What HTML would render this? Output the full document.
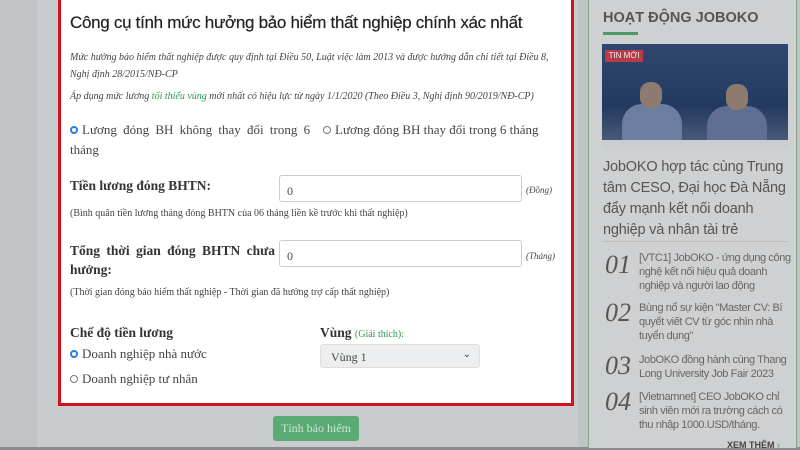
<!DOCTYPE html>
<html><head><meta charset="utf-8"><style>
*{margin:0;padding:0;box-sizing:border-box}
body{width:800px;height:450px;overflow:hidden;background:#c2c3c4;position:relative;font-family:"Liberation Serif",serif;color:#333}
.panel{position:absolute;left:37px;top:0;width:541px;height:450px;background:#cacbcc}
.red{position:absolute;left:58px;top:-4px;width:516px;height:410px;border:3px solid #d0121b;background:#fff}
.abs{position:absolute;white-space:nowrap}
h1{position:absolute;left:70px;top:13px;font:400 17px "Liberation Sans",sans-serif;letter-spacing:-0.3px;color:#222;white-space:nowrap;-webkit-text-stroke:0.2px #222}
.it{font-style:italic;font-size:10px;color:#444}
.g{color:#2a9a4a}
.r{font-size:13px;color:#444}
.b{font-weight:bold;font-size:13.5px;color:#333}
.sm{font-size:10px;color:#444}
.inp{position:absolute;background:#fff;border:1px solid #ccc;border-radius:3px;font-size:12px;padding:8px 7px;color:#444}
.dot{display:inline-block;width:8px;height:8px;border-radius:50%;border:1px solid #777;margin-right:4px;vertical-align:0}
.dot.on{border:2.5px solid #2d7fd6;background:#fff}
.side{position:absolute;left:588px;top:0;width:209px;height:448px;background:#cfd0d1;border-left:1px solid #7fa88d;border-right:1px solid #7fa88d}
.sf{font-family:"Liberation Sans",sans-serif}
.num{position:absolute;left:605px;font:italic 26px "Liberation Serif",serif;color:#555}
.it2{position:absolute;left:639px;font:11px/14px "Liberation Sans",sans-serif;letter-spacing:-0.4px;color:#666;width:156px}
</style></head><body>
<div class="panel"></div>
<div class="red"></div>
<h1>Công cụ tính mức hưởng bảo hiểm thất nghiệp chính xác nhất</h1>
<div class="abs it" style="left:70px;top:52px">Mức hưởng bảo hiểm thất nghiệp được quy định tại Điều 50, Luật việc làm 2013 và được hướng dẫn chi tiết tại Điều 8,</div>
<div class="abs it" style="left:70px;top:69px">Nghị định 28/2015/NĐ-CP</div>
<div class="abs it" style="left:70px;top:91px">Áp dụng mức lương <span class="g">tối thiểu vùng</span> mới nhất có hiệu lực từ ngày 1/1/2020 (Theo Điều 3, Nghị định 90/2019/NĐ-CP)</div>
<div class="abs r" style="left:70px;top:122px;word-spacing:3px"><span class="dot on"></span>Lương đóng BH không thay đổi trong 6</div>
<div class="abs r" style="left:323px;top:122px"><span class="dot"></span>Lương đóng BH thay đổi trong 6 tháng</div>
<div class="abs r" style="left:70px;top:142px">tháng</div>
<div class="abs b" style="left:70px;top:178px">Tiền lương đóng BHTN:</div>
<div class="inp" style="left:279px;top:175px;width:243px;height:27px">0</div>
<div class="abs it" style="left:526px;top:185px;font-size:9px">(Đồng)</div>
<div class="abs sm" style="left:70px;top:208px">(Bình quân tiền lương tháng đóng BHTN của 06 tháng liền kề trước khi thất nghiệp)</div>
<div class="abs b" style="left:70px;top:243px;word-spacing:3px">Tổng thời gian đóng BHTN chưa</div>
<div class="abs b" style="left:70px;top:262px">hưởng:</div>
<div class="inp" style="left:279px;top:240px;width:243px;height:27px">0</div>
<div class="abs it" style="left:526px;top:251px;font-size:9px">(Tháng)</div>
<div class="abs sm" style="left:70px;top:287px">(Thời gian đóng bảo hiểm thất nghiệp - Thời gian đã hưởng trợ cấp thất nghiệp)</div>
<div class="abs b" style="left:70px;top:325px">Chế độ tiền lương</div>
<div class="abs r" style="left:70px;top:346px"><span class="dot on"></span>Doanh nghiệp nhà nước</div>
<div class="abs r" style="left:70px;top:371px"><span class="dot"></span>Doanh nghiệp tư nhân</div>
<div class="abs b" style="left:320px;top:325px">Vùng <span class="g" style="font-weight:normal;font-size:10px">(Giải thích):</span></div>
<div class="abs" style="left:320px;top:344px;width:160px;height:24px;background:#eceeef;border:1px solid #ddd;border-radius:3px;font-size:12px;padding:5px 10px;color:#444">Vùng 1<span style="position:absolute;right:8px;top:4px;font-size:10px">⌄</span></div>
<div class="abs" style="left:273px;top:416px;width:86px;height:25px;background:#5aaa74;border-radius:3px;color:#cfe6d5;font-size:12px;text-align:center;line-height:25px">Tính bảo hiểm</div>
<div style="position:absolute;left:0;top:447px;width:800px;height:3px;background:#8a8b8c"></div>
<div class="side"></div>
<div class="abs sf" style="left:603px;top:10px;font-size:14.5px;font-weight:bold;color:#555">HOẠT ĐỘNG JOBOKO</div>
<div class="abs" style="left:603px;top:32px;width:35px;height:3px;background:#4e9a64"></div>
<div class="abs" style="left:602px;top:44px;width:186px;height:104px;background:linear-gradient(#2f4770,#233a60 60%,#51617d)">
<div style="position:absolute;left:3px;top:6px;width:38px;height:12px;background:#b73c48;color:#eee;font:8px/12px 'Liberation Sans',sans-serif;text-align:center">TIN MỚI</div>
<div style="position:absolute;left:20px;top:60px;width:60px;height:44px;background:#6b7ea0;border-radius:20px 20px 0 0"></div>
<div style="position:absolute;left:38px;top:38px;width:22px;height:26px;background:#8d7b70;border-radius:10px"></div>
<div style="position:absolute;left:105px;top:62px;width:60px;height:42px;background:#5f6f92;border-radius:20px 20px 0 0"></div>
<div style="position:absolute;left:124px;top:40px;width:22px;height:26px;background:#8d7b70;border-radius:10px"></div>
<div style="position:absolute;left:0;top:96px;width:186px;height:8px;background:#c9ccd1"></div>
</div>
<div class="abs sf" style="left:603px;top:157px;font-size:14.5px;line-height:21px;letter-spacing:-0.2px;color:#555;white-space:normal;width:192px">JobOKO hợp tác cùng Trung tâm CESO, Đại học Đà Nẵng đẩy mạnh kết nối doanh nghiệp và nhân tài trẻ</div>
<div class="abs" style="left:603px;top:241px;width:185px;height:1px;background:#bbb"></div>
<div class="num" style="top:250px">01</div><div class="it2" style="top:251px">[VTC1] JobOKO - ứng dụng công nghệ kết nối hiệu quả doanh nghiệp và người lao động</div>
<div class="num" style="top:298px">02</div><div class="it2" style="top:301px">Bùng nổ sự kiện "Master CV: Bí quyết viết CV từ góc nhìn nhà tuyển dụng"</div>
<div class="num" style="top:351px">03</div><div class="it2" style="top:353px">JobOKO đồng hành cùng Thang Long University Job Fair 2023</div>
<div class="num" style="top:387px">04</div><div class="it2" style="top:390px">[Vietnamnet] CEO JobOKO chỉ sinh viên mới ra trường cách có thu nhập 1000.USD/tháng.</div>
<div class="abs sf" style="left:727px;top:440px;font-size:9px;font-weight:bold;color:#444">XEM THÊM <span style="color:#6a9">›</span></div>
</body></html>
